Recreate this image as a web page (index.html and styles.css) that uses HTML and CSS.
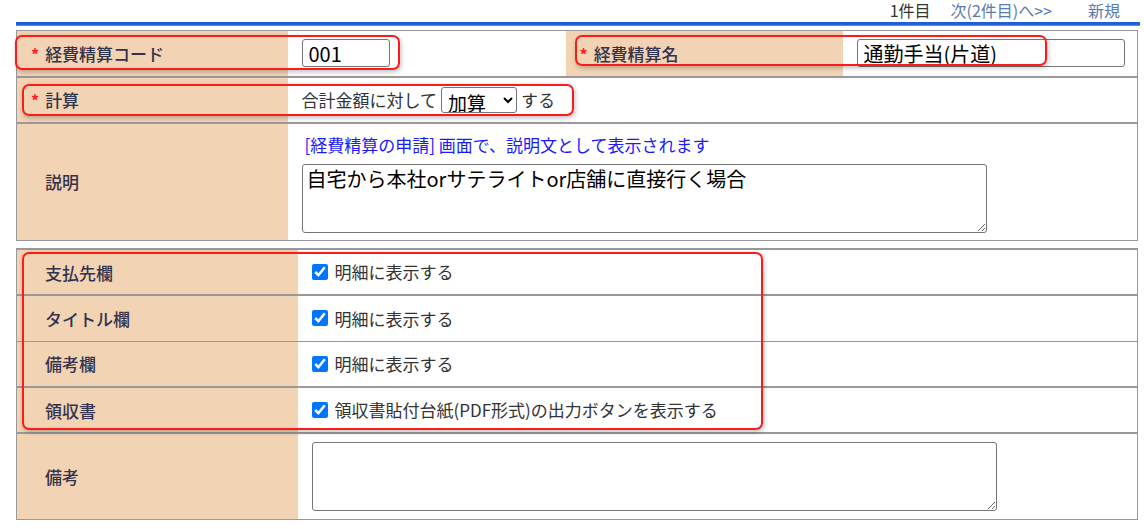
FILE: index.html
```html
<!DOCTYPE html>
<html lang="ja">
<head>
    <meta charset="UTF-8">
    <title>経費精算</title>
    <link rel="stylesheet" href="styles.css">
</head>
<body>
    <div class="pager">
        <span>1件目</span>
        <a href="#">次(2件目)へ&gt;&gt;</a>
        <a href="#" class="new-link">新規</a>
    </div>
    <div class="blue-bar"></div>

    <div class="form-wrap">
        <table class="form-table first">
            <colgroup>
                <col class="col-label">
                <col class="col-value">
                <col class="col-label2">
                <col>
            </colgroup>
            <tr class="row-code">
                <th><span class="req">*</span>経費精算コード</th>
                <td><input type="text" class="input-code" value="001"></td>
                <th><span class="req">*</span>経費精算名</th>
                <td><input type="text" class="input-name" value="通勤手当(片道)"></td>
            </tr>
            <tr class="row-calc">
                <th><span class="req">*</span>計算</th>
                <td colspan="3">
                    <span class="calc">合計金額に対して<select><option>加算</option><option>減算</option></select>する</span>
                </td>
            </tr>
            <tr class="row-desc">
                <th class="plain">説明</th>
                <td colspan="3">
                    <div class="hint">[経費精算の申請] 画面で、説明文として表示されます</div>
                    <textarea class="desc">自宅から本社orサテライトor店舗に直接行く場合</textarea>
                </td>
            </tr>
        </table>
        <div class="mark mark-code"></div>
        <div class="mark mark-name"></div>
        <div class="mark mark-calc"></div>
    </div>

    <div class="form-wrap">
        <table class="form-table second">
            <colgroup>
                <col class="col-label-wide">
                <col>
            </colgroup>
            <tr class="row-check">
                <th class="plain">支払先欄</th>
                <td><label><input type="checkbox" checked>明細に表示する</label></td>
            </tr>
            <tr class="row-check thick">
                <th class="plain">タイトル欄</th>
                <td><label><input type="checkbox" checked>明細に表示する</label></td>
            </tr>
            <tr class="row-check">
                <th class="plain">備考欄</th>
                <td><label><input type="checkbox" checked>明細に表示する</label></td>
            </tr>
            <tr class="row-check thick">
                <th class="plain">領収書</th>
                <td><label><input type="checkbox" checked>領収書貼付台紙(PDF形式)の出力ボタンを表示する</label></td>
            </tr>
            <tr class="row-note">
                <th class="plain">備考</th>
                <td><textarea class="note"></textarea></td>
            </tr>
        </table>
        <div class="mark mark-checks"></div>
    </div>
</body>
</html>
```

FILE: styles.css
```css
* {
    box-sizing: border-box;
}

body {
    margin: 0;
    padding: 0 6px 0 16px;
    font-family: "Noto Sans CJK JP", "Noto Sans", sans-serif;
    font-size: 17px;
    color: #333;
    background: #fff;
}

.pager {
    height: 20px;
    display: flex;
    justify-content: flex-end;
    align-items: center;
    gap: 20px;
    padding-right: 18px;
    font-size: 16px;
    color: #333;
    line-height: 20px;
}

.pager a {
    color: #5b7ab0;
    text-decoration: none;
}

.pager .new-link {
    margin-left: 16px;
}

.blue-bar {
    height: 4px;
    background: linear-gradient(#1d5fd9, #1d5fd9 60%, #6f9ae8);
    margin-top: 2px;
    margin-right: -2px;
}

.form-wrap {
    position: relative;
    margin-top: 4px;
}

.form-wrap + .form-wrap {
    margin-top: 7px;
}

.form-table {
    width: 100%;
    border-collapse: collapse;
    border: 1px solid #999;
}

.form-table th,
.form-table td {
    border-top: 2px solid #999;
    padding: 0;
    vertical-align: middle;
    text-align: left;
}

.form-table tr:first-child th,
.form-table tr:first-child td {
    border-top: 1px solid #999;
}

.form-table th {
    background: #f2d4b4;
    color: #33334d;
    font-weight: 500;
    font-size: 17px;
    padding-left: 14px;
    white-space: nowrap;
}

.form-table th.plain {
    padding-left: 28px;
}

.col-label { width: 271px; }
.col-value { width: 278px; }
.col-label2 { width: 277px; }
.col-label-wide { width: 281px; }

.req {
    color: #ff2020;
    font-weight: bold;
    margin-right: 6px;
    font-size: 16px;
}

.row-code th,
.row-code td {
    height: 46px;
}

.row-code td {
    padding-left: 14px;
}

.row-code th + td + th {
    padding-left: 14px;
}

input[type="text"] {
    font-family: "Noto Sans CJK JP", "Liberation Sans", sans-serif;
    font-size: 20px;
    height: 28px;
    border: 1px solid #767676;
    border-radius: 3px;
    padding: 0 6px;
    color: #000;
}

.input-code {
    width: 88px;
}

.input-name {
    width: 268px;
}

.row-calc th,
.row-calc td {
    height: 46px;
}

.row-calc td {
    padding-left: 14px;
}

.calc {
    display: inline-flex;
    align-items: center;
    gap: 4px;
    font-size: 17px;
    color: #333;
}

.calc select {
    font-family: "Noto Sans CJK JP", sans-serif;
    font-size: 19px;
    height: 26px;
    width: 76px;
    border: 1px solid #767676;
    border-radius: 3px;
    background: #fff;
    color: #000;
    padding: 0 2px;
}

.row-desc th,
.row-desc td {
    height: 118px;
}

.row-desc td {
    padding: 9px 0 6px 14px;
    vertical-align: top;
}

.hint {
    color: #1a1aff;
    font-size: 17px;
    line-height: 24px;
    padding-left: 3px;
    margin-bottom: 7px;
}

textarea {
    display: block;
    font-family: "Noto Sans CJK JP", sans-serif;
    font-size: 20px;
    border: 1px solid #767676;
    border-radius: 3px;
    padding: 0 4px;
    color: #000;
    resize: both;
}

.desc {
    width: 685px;
    height: 69px;
    line-height: 28px;
}

.row-check th,
.row-check td {
    height: 46px;
    border-top-width: 1px;
}

.row-check.thick th,
.row-check.thick td {
    border-top-width: 2px;
}

.form-table.second tr:first-child th,
.form-table.second tr:first-child td {
    border-top: 2px solid #999;
}

.row-check td {
    padding-left: 14px;
}

.row-check label {
    display: inline-flex;
    align-items: center;
    gap: 7px;
    font-size: 17px;
    color: #333;
}

.row-check input {
    width: 16px;
    height: 16px;
    margin: 0;
    accent-color: #0075ff;
}

.row-note th,
.row-note td {
    height: 86px;
    border-top-width: 2px;
}

.row-note td {
    padding: 7px 0 7px 14px;
}

.note {
    width: 685px;
    height: 69px;
}

/* red review annotations drawn over the form */
.mark {
    position: absolute;
    border: 2px solid #ff1a1a;
    border-radius: 7px;
    box-shadow: 1px 2px 5px rgba(0, 0, 0, 0.25);
    pointer-events: none;
}

.mark-code {
    left: -1px;
    top: 5px;
    width: 385px;
    height: 35px;
}

.mark-name {
    left: 559px;
    top: 5px;
    width: 472px;
    height: 31px;
}

.mark-calc {
    left: 6px;
    top: 54px;
    width: 552px;
    height: 32px;
}

.mark-checks {
    left: 6px;
    top: 4px;
    width: 741px;
    height: 178px;
}
```
